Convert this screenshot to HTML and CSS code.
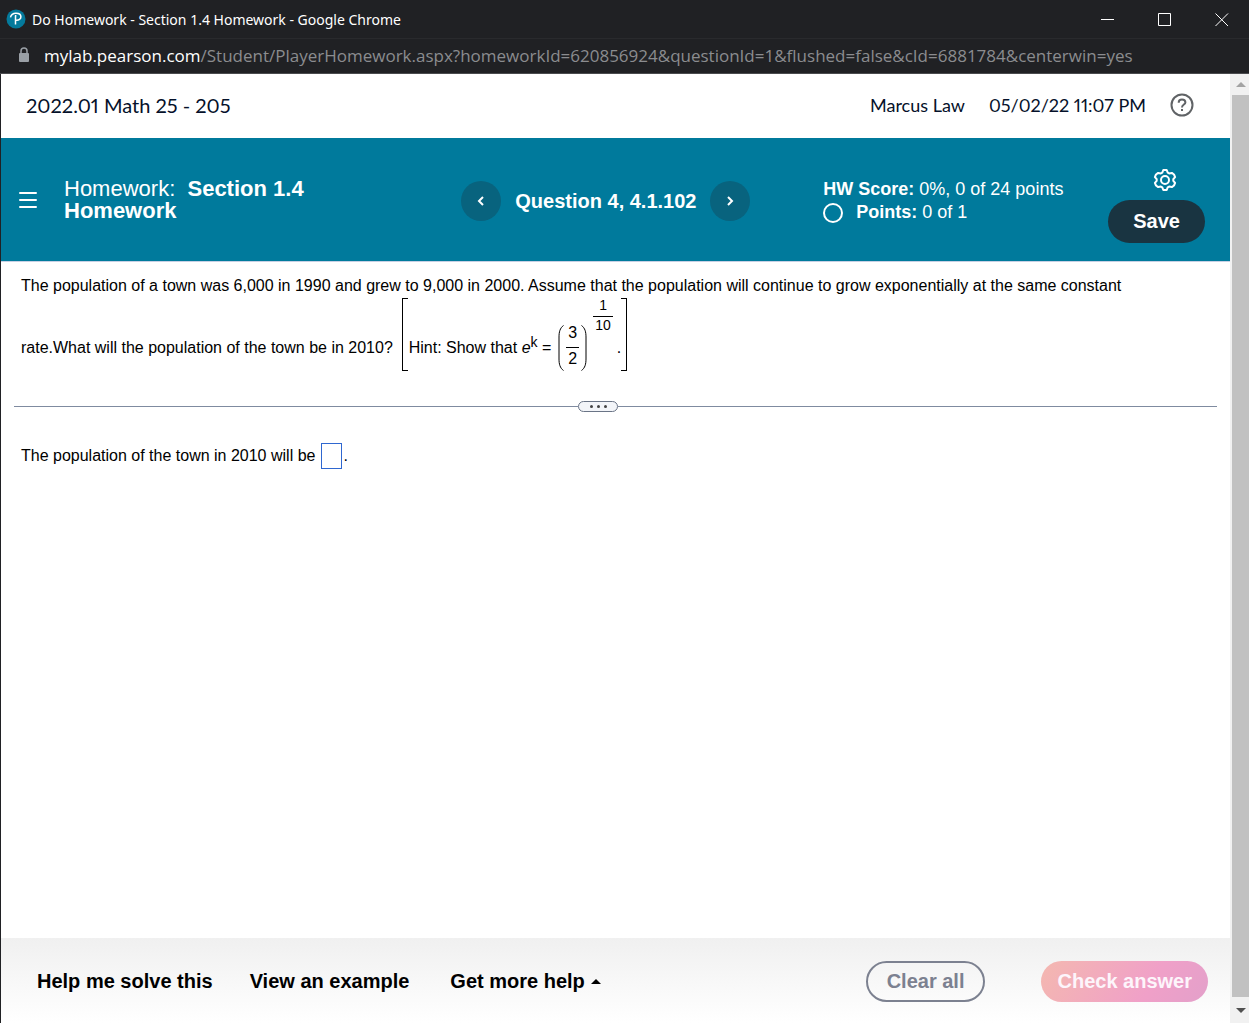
FILE: index.html
```html
<!DOCTYPE html>
<html lang="en">
<head>
  <meta charset="UTF-8" />
  <title>Do Homework - Section 1.4 Homework</title>
  <meta name="viewport" content="width=device-width, initial-scale=1.0" />
  <link rel="stylesheet" href="styles.css">
</head>
<body>
  <!-- Window title -->
  <div class="titlebar">
    <svg class="favicon" width="20" height="20" viewBox="0 0 20 20" aria-hidden="true">
      <circle cx="10" cy="10" r="9.5" fill="#047a9c" />
      <path d="M4.500 8.400C5 5.900 7.200 4.300 10 4.300c3 0 4.900 1.300 4.900 3.500 0 2.300-2.100 3.700-4.900 3.400M9 6.700h1.400M9.500 6.500v9" fill="none" stroke="#fff" stroke-width="1.500" />
    </svg>
    <span class="window-title">Do Homework - Section 1.4 Homework - Google Chrome</span>
    <div class="window-buttons">
      <button aria-label="Minimize"><svg width="14" height="14" viewBox="0 0 14 14"><path d="M0 6.5h13" /></svg></button>
      <button aria-label="Maximize"><svg width="14" height="14" viewBox="0 0 14 14"><path d="M.5.5h12v12H.5z" /></svg></button>
      <button aria-label="Close"><svg width="14" height="14" viewBox="0 0 14 14"><path d="M.5.5l12.5 12.5M13 .5L.5 13" /></svg></button>
    </div>
  </div>
  <div class="urlbar">
    <svg width="12" height="16" viewBox="0 0 12 16" aria-hidden="true">
      <path d="M3 7V4a3 3 0 0 1 6 0v3" fill="none" stroke="#9aa0a6" stroke-width="1.5" />
      <rect x="1" y="6" width="10" height="9" rx="1" fill="#9aa0a6" />
    </svg>
    <span class="url"><span class="host">mylab.pearson.com</span>/Student/PlayerHomework.aspx?homeworkId=620856924&amp;questionId=1&amp;flushed=false&amp;cId=6881784&amp;centerwin=yes</span>
  </div>

  <div class="viewport">
    <div class="page">
      <header class="course">
        <span class="course-name">2022.01 Math 25 - 205</span>
        <span class="user">Marcus Law</span>
        <span class="time">05/02/22 11:07 PM</span>
        <button class="help" aria-label="Help">
          <svg width="24" height="24" viewBox="0 0 24 24" fill="none" stroke="#606366" stroke-width="2">
            <circle cx="12" cy="12" r="10.5" />
            <path d="M8.7 9.7C8.7 7.6 10 6.5 12 6.5s3.4 1.1 3.4 2.9c0 2.1-3.4 2.3-3.4 5M12 16v2" />
          </svg>
        </button>
      </header>

      <div class="toolbar">
        <button class="menu" aria-label="Menu">
          <svg width="20" height="18" viewBox="0 0 20 18" stroke="#fff" stroke-width="2" stroke-linecap="round"><path d="M2 2h16M2 9h16M2 16h16" /></svg>
        </button>
        <h1 class="title"><span>Homework:</span>&nbsp; Section 1.4 Homework</h1>
        <div class="question-nav">
          <button class="round" aria-label="Previous question">
            <svg width="8" height="10" viewBox="0 0 8 10"><path d="M6 1L2 5l4 4" /></svg>
          </button>
          <h2>Question 4, 4.1.102</h2>
          <button class="round" aria-label="Next question">
            <svg width="8" height="10" viewBox="0 0 8 10"><path d="M2 1l4 4-4 4" /></svg>
          </button>
        </div>
        <div class="score">
          <div><b>HW Score:</b> 0%, 0 of 24 points</div>
          <div class="points"><span class="ring"></span><span><b>Points:</b> 0 of 1</span></div>
        </div>
        <div class="actions">
          <button class="gear" aria-label="Settings">
            <svg width="24" height="24" viewBox="0 0 24 24" fill="none" stroke="#fff" stroke-width="2" stroke-linejoin="round">
              <path d="M10.300 2h3.400l1 2.600 1.400.8 2.700-.5L21 6.500l1.100 2.600-1.800 2.100v1.600l1.800 2.100L21 17.500l-2.200 1.600-2.700-.5-1.400.8-1 2.600h-3.400l-1-2.600-1.400-.8-2.700.5L3 17.500l-1.100-2.600 1.800-2.100v-1.600L1.900 9.100 3 6.500l2.200-1.600 2.700.5 1.400-.8z" />
              <circle cx="12" cy="12" r="4" />
            </svg>
          </button>
          <button class="save">Save</button>
        </div>
      </div>

      <main class="content">
        <p class="question">The population of a town was 6,000 in 1990 and grew to 9,000 in 2000. Assume that the population will continue to grow exponentially at the same constant rate.What will the population of the town be in 2010?&nbsp;
          <span class="hint">
            <span class="hint-text">Hint: Show that <i>e</i><sup>k</sup> =</span>
            <svg class="paren" width="6" height="46" viewBox="0 0 6 46"><path d="M5.500.5C2 3 1 7 1 12v22c0 5 1 9 4.500 11.500" /></svg>
            <span class="fraction"><span>3</span><span>2</span></span>
            <svg class="paren" width="6" height="46" viewBox="0 0 6 46"><path d="M.5.5C4 3 5 7 5 12v22c0 5-1 9-4.500 11.500" /></svg>
            <span class="fraction exponent"><span>1</span><span>10</span></span>
            <span class="hint-text">.</span>
          </span>
        </p>

        <div class="divider">
          <button aria-label="Resize question"><i></i><i></i><i></i></button>
        </div>

        <div class="answer">
          <label for="population">The population of the town in 2010 will be</label>
          <input type="text" id="population"><span>.</span>
        </div>
      </main>

      <footer class="bottom">
        <button class="link">Help me solve this</button>
        <button class="link">View an example</button>
        <button class="link more">Get more help <svg width="10" height="5" viewBox="0 0 10 5"><path d="M0 5l5-5 5 5z" /></svg></button>
        <button class="pill clear">Clear all</button>
        <button class="pill check">Check answer</button>
      </footer>
    </div>

    <!-- Scrollbar -->
    <div class="scrollbar">
      <button aria-label="Scroll up"><svg width="10" height="5" viewBox="0 0 10 5"><path d="M0 5l5-5 5 5z" fill="#a3a3a3" /></svg></button>
      <div class="thumb"></div>
      <button class="down" aria-label="Scroll down"><svg width="10" height="5" viewBox="0 0 10 5"><path d="M0 0l5 5 5-5z" fill="#505050" /></svg></button>
    </div>
  </div>
</body>
</html>
```
FILE: styles.css
```css
* {
  box-sizing: border-box;
}

body {
  margin: 0;
  min-height: 100vh;
  display: flex;
  flex-direction: column;
  background-color: #fff;
  color: #000;
  font-family: "Liberation Sans", Arial, sans-serif;
  font-size: 16px;
}

button {
  padding: 0;
  border: none;
  background: none;
  color: inherit;
  font-family: inherit;
  cursor: pointer;
}

svg {
  display: block;
}

/* browser window */
.titlebar {
  display: flex;
  align-items: center;
  height: 39px;
  padding-left: 6px;
  background-color: #202124;
  border-bottom: 1px solid #292a2d;
  color: #fff;
  font-family: "Noto Sans", "Open Sans", sans-serif;
  font-size: 14px;
}

.window-title {
  flex: 1;
  margin-left: 6px;
}

.window-buttons {
  display: flex;
}

.window-buttons button {
  display: flex;
  align-items: center;
  justify-content: center;
  width: 57px;
  height: 38px;
  padding: 2px 0 0 3px;
}

.window-buttons path {
  fill: none;
  stroke: #fff;
}

.urlbar {
  display: flex;
  align-items: center;
  gap: 14px;
  height: 35px;
  padding: 0 0 2px 18px;
  background-color: #202124;
  border-bottom: 1px solid #4a4b4e;
  color: #8b8c8f;
  font-family: "Open Sans", "Noto Sans", sans-serif;
  font-size: 17px;
  white-space: nowrap;
}

.host {
  color: #fff;
}

.viewport {
  flex: 1;
  display: flex;
  border-left: 1px solid #202124;
}

.page {
  flex: 1;
  display: flex;
  flex-direction: column;
}

/* course header */
.course {
  display: flex;
  align-items: center;
  gap: 24px;
  height: 64px;
  padding: 0 36px 2px 25px;
  color: #05112a;
  font-family: Lato, sans-serif;
  font-size: 18px;
  font-variant-numeric: proportional-nums;
}

.course-name {
  flex: 1;
  font-size: 20px;
}

/* blue toolbar */
.toolbar {
  display: grid;
  grid-template-columns: 46px 1fr 362px 285px auto;
  align-items: center;
  height: 124px;
  padding: 0 25px 0 17px;
  background-color: #007a9c;
  border-bottom: 1px solid #c7d0e4;
  color: #fff;
}

.title {
  max-width: 260px;
  margin: 0;
  font-size: 22px;
  line-height: 22px;
}

.title span {
  font-weight: normal;
}

.question-nav {
  display: flex;
  align-items: center;
  gap: 14px;
  padding-top: 3px;
}

.question-nav h2 {
  margin: 0;
  font-size: 20px;
}

.round {
  display: flex;
  align-items: center;
  justify-content: center;
  width: 40px;
  height: 40px;
  border-radius: 50%;
  background-color: #08637e;
}

.round path {
  fill: none;
  stroke: #fff;
  stroke-width: 2;
}

.score {
  padding-top: 3px;
  font-size: 18px;
  line-height: 23px;
}

.points {
  display: flex;
  gap: 13px;
}

.ring {
  width: 20px;
  height: 20px;
  margin-top: 2px;
  border: 2px solid #fff;
  border-radius: 50%;
}

.actions {
  display: flex;
  flex-direction: column;
  align-items: center;
  gap: 8px;
  padding-top: 12px;
}

.gear {
  margin-left: 16px;
}

.save {
  height: 43px;
  padding: 0 25px;
  border-radius: 22px;
  background-color: #193441;
  font-size: 20px;
  font-weight: bold;
}

/* question */
.content {
  flex: 1;
  padding: 12px 13px;
}

.question {
  margin: 0;
  padding: 0 30px 0 7px;
  line-height: 24px;
}

.hint {
  display: inline-flex;
  align-items: flex-end;
  height: 73px;
  vertical-align: -18px;
  line-height: 20px;
}

.hint::before,
.hint::after {
  content: "";
  align-self: stretch;
  width: 5px;
  border: 1px solid #000;
}

.hint::before {
  margin-right: 1px;
  border-right: none;
}

.hint::after {
  border-left: none;
}

.hint-text {
  margin-bottom: 13px;
  white-space: nowrap;
}

.hint sup {
  font-size: 14px;
  line-height: 0;
}

.hint .paren {
  fill: none;
  stroke: #000;
}

.hint-text + .paren {
  margin-left: 7px;
}

.fraction {
  margin: 0 2px 2px;
  text-align: center;
}

.fraction span {
  display: block;
  padding: 0 2px;
}

.fraction span:first-child {
  padding-bottom: 4px;
}

.fraction span + span {
  padding-top: 1px;
  border-top: 1px solid #000;
}

.exponent {
  align-self: flex-start;
  margin: 0 4px 0 6px;
  font-size: 14px;
  line-height: 14px;
}

.divider {
  display: flex;
  align-items: center;
  margin: 30px 0 31px;
}

.divider::before,
.divider::after {
  content: "";
  height: 1px;
  background-color: #7f8ba0;
}

.divider::before {
  flex: 564;
}

.divider::after {
  flex: 599;
}

.divider button {
  display: flex;
  align-items: center;
  justify-content: center;
  gap: 4px;
  width: 40px;
  height: 11px;
  border: 1px solid #6a7486;
  border-radius: 6px;
  background-color: #f3f5f9;
}

.divider i {
  width: 3px;
  height: 3px;
  border-radius: 50%;
  background-color: #444;
}

.answer {
  display: flex;
  align-items: center;
  padding-left: 7px;
}

.answer input {
  width: 21px;
  height: 26px;
  margin: 0 1px 0 6px;
  padding: 0 2px;
  border: 1px solid #2f67d0;
  font-size: 16px;
}

/* footer */
.bottom {
  display: flex;
  align-items: center;
  gap: 37px;
  height: 85px;
  padding: 2px 22px 0 36px;
  background-image: linear-gradient(#f0f0f0, #fff);
}

.link {
  font-size: 20px;
  font-weight: bold;
}

.more {
  display: flex;
  align-items: center;
  gap: 6px;
  margin-left: 4px;
}

.pill {
  height: 41px;
  border-radius: 21px;
  font-size: 20px;
  font-weight: bold;
}

.clear {
  margin: 0 19px 0 auto;
  padding: 0 19px;
  border: 2px solid #7c8190;
  color: #7c8190;
}

.check {
  padding: 0 16px;
  background-image: linear-gradient(120deg, #f4b8b0, #f0a0c8 65%, #e3a0ca);
  color: #fdf5fb;
}

/* scrollbar */
.scrollbar {
  display: flex;
  flex-direction: column;
  width: 19px;
  padding-left: 2px;
  background-color: #f1f1f1;
}

.scrollbar button {
  display: flex;
  align-items: center;
  justify-content: center;
  height: 21px;
}

.scrollbar .down {
  height: 26px;
}

.thumb {
  flex: 1;
  background-color: #c1c1c1;
}
```
